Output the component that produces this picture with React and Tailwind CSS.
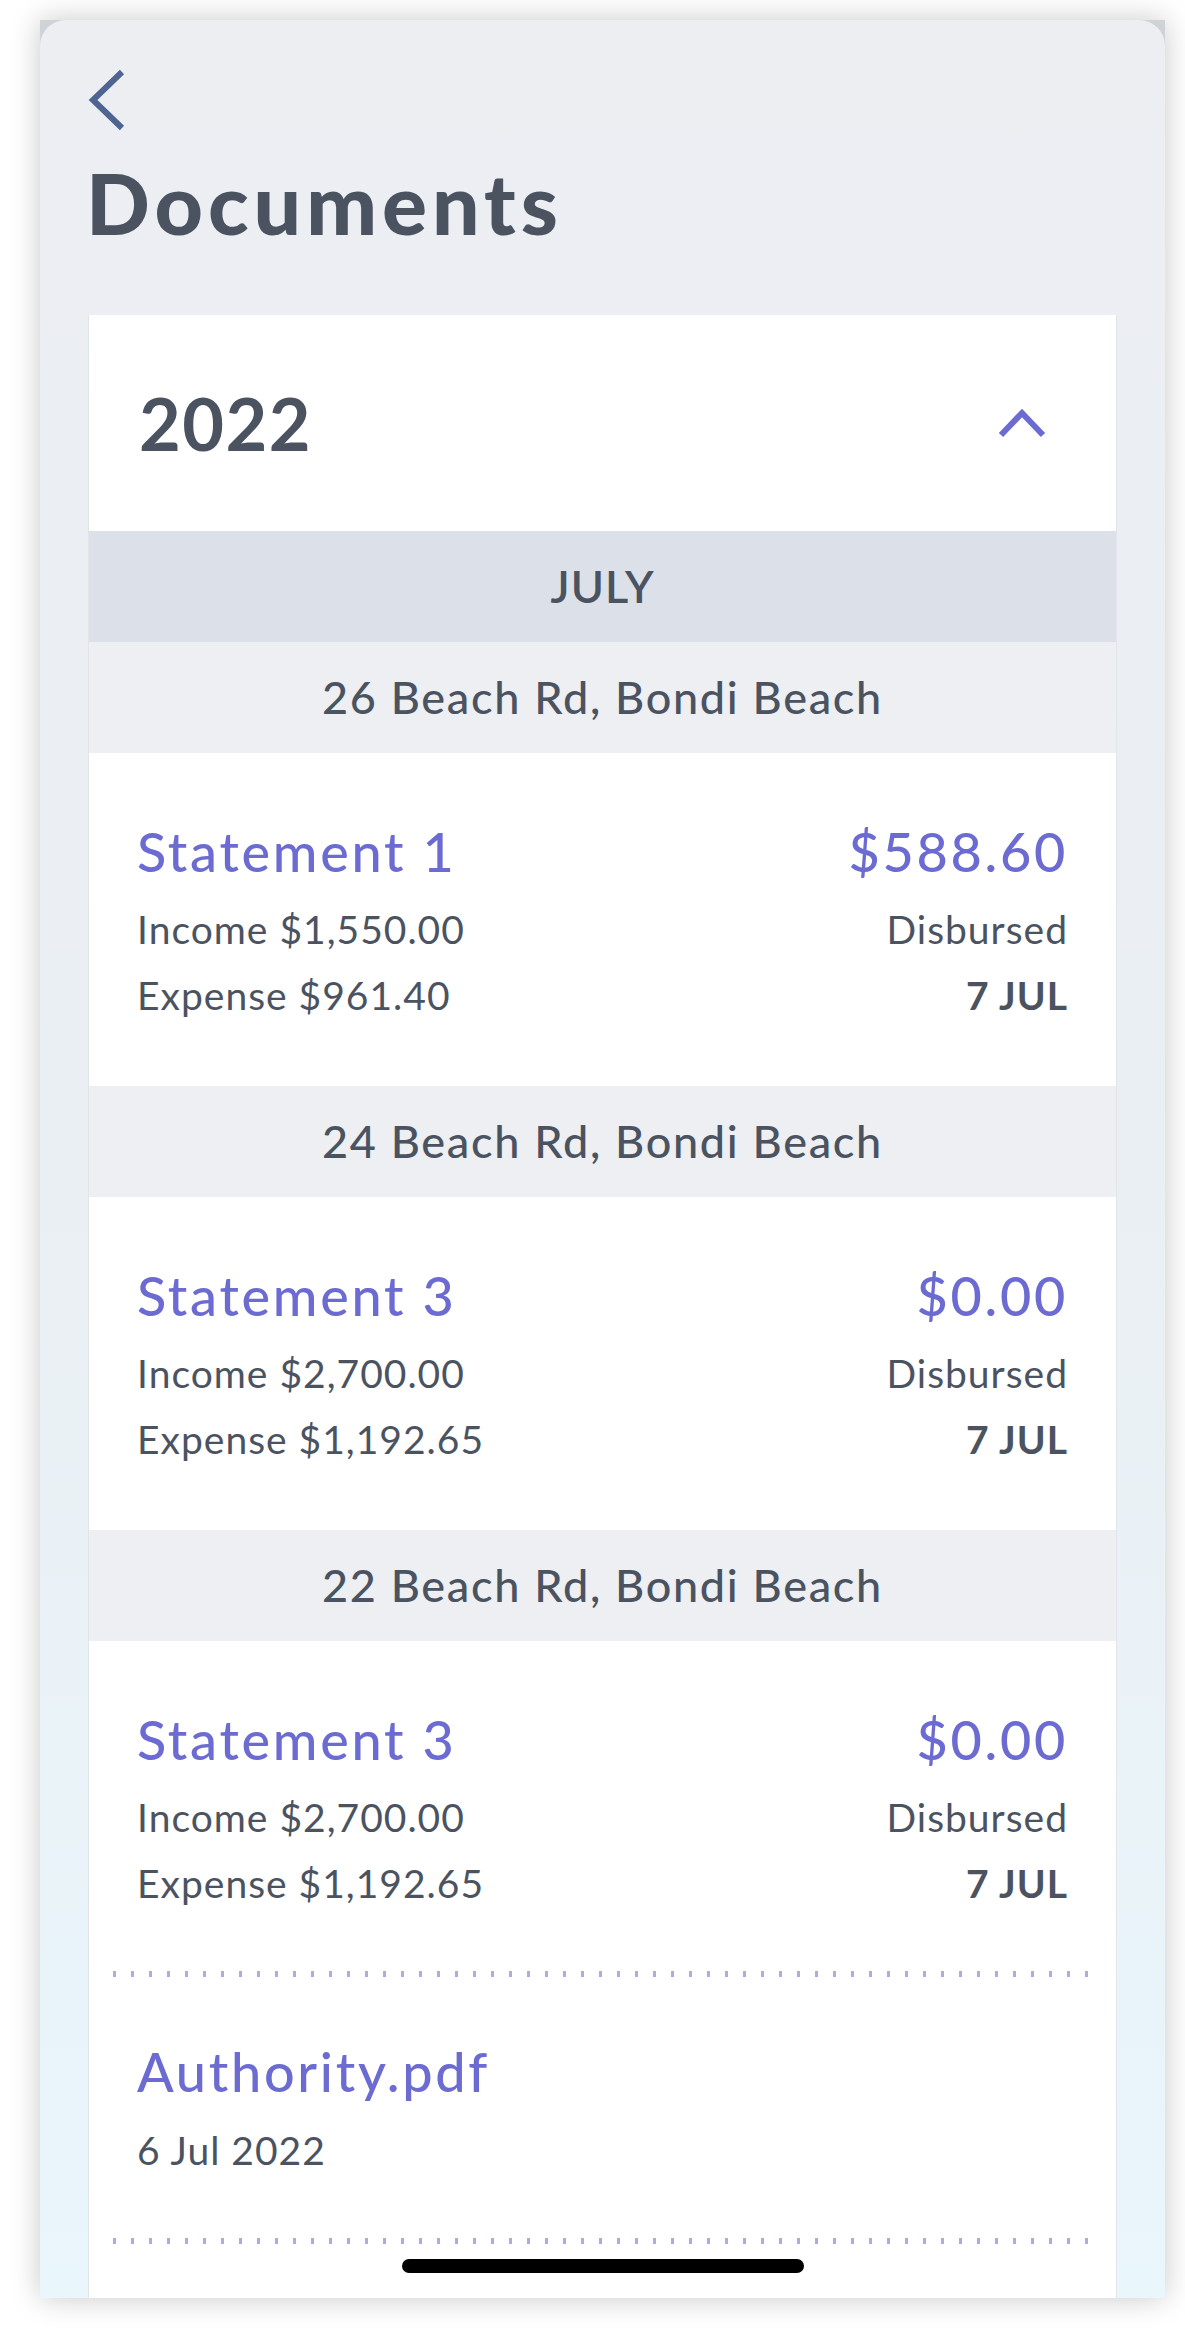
import React from 'react';

const statements = [
  {
    address: '26 Beach Rd, Bondi Beach',
    title: 'Statement 1',
    amount: '$588.60',
    income: 'Income $1,550.00',
    expense: 'Expense $961.40',
    status: 'Disbursed',
    date: '7 JUL',
  },
  {
    address: '24 Beach Rd, Bondi Beach',
    title: 'Statement 3',
    amount: '$0.00',
    income: 'Income $2,700.00',
    expense: 'Expense $1,192.65',
    status: 'Disbursed',
    date: '7 JUL',
  },
  {
    address: '22 Beach Rd, Bondi Beach',
    title: 'Statement 3',
    amount: '$0.00',
    income: 'Income $2,700.00',
    expense: 'Expense $1,192.65',
    status: 'Disbursed',
    date: '7 JUL',
  },
];

const BackIcon = () => (
  <svg width="38" height="62" viewBox="0 0 38 62" fill="none">
    <polyline points="34,3 5,31 34,59" stroke="#4e6591" strokeWidth="6" strokeLinejoin="miter" />
  </svg>
);

const ChevronUp = () => (
  <svg width="48" height="30" viewBox="0 0 48 30" fill="none">
    <polyline points="3,27 24,5 45,27" stroke="#6b6bd2" strokeWidth="6" strokeLinejoin="miter" />
  </svg>
);

const Dots = () => (
  <div className="mx-[24px] h-[6px] bg-[repeating-linear-gradient(90deg,#abace2_0px,#abace2_3px,transparent_3px,transparent_18px)]" />
);

const StatementRow = ({ s, last }) => (
  <div>
    <div className="h-[111px] bg-[#edeff3] text-center text-[45px] leading-[111px] font-medium tracking-[1.7px] text-[#4b5361]">
      {s.address}
    </div>
    <div className={`flex justify-between bg-white px-[48px] pt-[57px] ${last ? 'pb-[55px]' : 'pb-[58px]'}`}>
      <div>
        <div className="text-[54px] leading-[84px] font-medium tracking-[2.7px] text-[#6b6bd2]">{s.title}</div>
        <div className="mt-[2px] text-[39px] leading-[66px] tracking-[1px] text-[#4b5361]">{s.income}</div>
        <div className="text-[39px] leading-[66px] tracking-[1px] text-[#4b5361]">{s.expense}</div>
      </div>
      <div className="text-right">
        <div className="text-[54px] leading-[84px] font-medium tracking-[2.7px] text-[#6b6bd2]">{s.amount}</div>
        <div className="mt-[2px] text-[39px] leading-[66px] tracking-[1px] text-[#4b5361]">{s.status}</div>
        <div className="text-[39px] leading-[66px] font-bold tracking-[1px] text-[#4b5361]">{s.date}</div>
      </div>
    </div>
  </div>
);

export default function App() {
  return (
    <div className="min-h-[2338px] bg-white pt-[20px] pl-[40px] font-['Lato',sans-serif]">
      <div className="w-[1125px] h-[2278px] bg-[#cfd3d7] shadow-[0_0_28px_rgba(0,0,0,0.22)]">
        <div className="relative flex h-full flex-col overflow-hidden rounded-t-[26px] bg-gradient-to-b from-[#eceef2] via-[#eaeff3] to-[#e9f6fc]">
          <div className="pl-[48px] pt-[49px]">
            <BackIcon />
          </div>
          <h1 className="mt-[22px] pl-[46px] text-[84px] leading-[100px] font-black tracking-[5px] text-[#4b5361]">
            Documents
          </h1>

          <div className="mx-[48px] mt-[62px] flex flex-1 flex-col border-x border-[#e1e5ea] bg-white">
            <div className="flex h-[216px] items-center justify-between pl-[50px] pr-[70px]">
              <span className="text-[72px] font-bold tracking-[1.5px] text-[#4b5361]">2022</span>
              <ChevronUp />
            </div>
            <div className="h-[111px] bg-[#dce0e8] text-center text-[45px] leading-[111px] font-semibold tracking-[1px] text-[#4b5361]">
              JULY
            </div>

            {statements.map((s, i) => (
              <StatementRow key={i} s={s} last={i === statements.length - 1} />
            ))}

            <Dots />
            <div className="px-[48px] pt-[53px] pb-[55px]">
              <div className="text-[54px] leading-[84px] font-medium tracking-[2.7px] text-[#6b6bd2]">Authority.pdf</div>
              <div className="mt-[3px] text-[39px] leading-[66px] tracking-[1px] text-[#4b5361]">6 Jul 2022</div>
            </div>
            <Dots />
          </div>

          <div className="absolute bottom-[25px] left-1/2 h-[14px] w-[402px] -translate-x-1/2 rounded-full bg-black" />
        </div>
      </div>
    </div>
  );
}
